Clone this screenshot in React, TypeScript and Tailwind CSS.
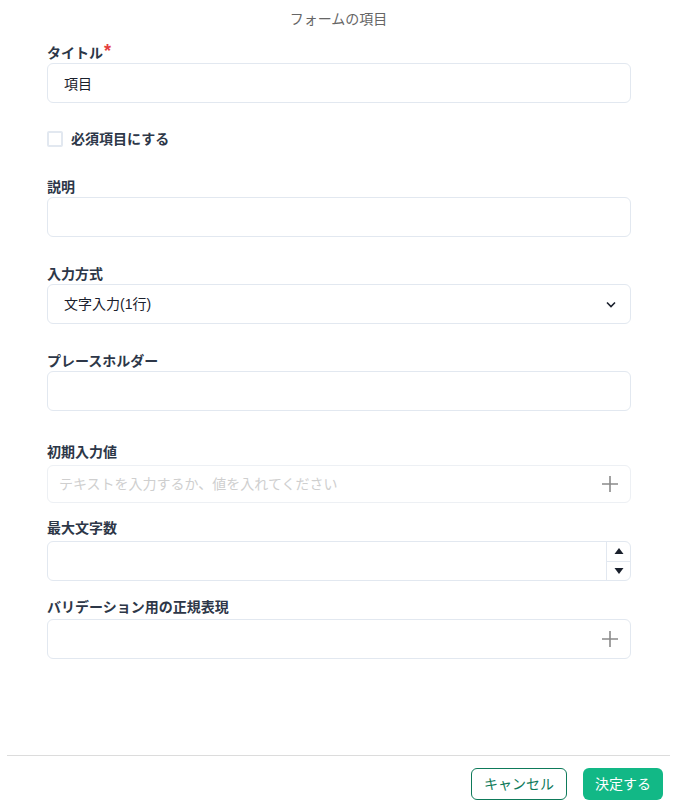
import React, { useState } from 'react'

const font = { fontFamily: '"Liberation Sans", "Noto Sans CJK JP", sans-serif' }

const Label = ({ text, required, className = '' }: { text: string; required?: boolean; className?: string }) => (
    <div className={`h-5 leading-5 text-[14px] font-bold text-[#2d3748] flex items-start ${className}`}>
        <span>{text}</span>
        {required && <span className="text-[#e53e3e] text-[18px] leading-[16px] ml-[1px] font-bold">*</span>}
    </div>
)

const Plus = () => (
    <svg width="18" height="18" viewBox="0 0 18 18" className="text-[#8a8a8a]">
        <path d="M9 1v16M1 9h16" stroke="currentColor" strokeWidth="1.6" fill="none" />
    </svg>
)

export default function App() {
    const [title, setTitle] = useState('項目')
    const [required, setRequired] = useState(false)

    return (
        <div style={font} className="w-full h-[808px] bg-white flex flex-col">
            <div className="h-[38px] flex items-center justify-center text-[14px] text-[#666]">フォームの項目</div>

            <div className="pl-[47px] pr-[46px] flex flex-col">
                <Label text="タイトル" required className="mt-[5px]" />
                <input
                    value={title}
                    onChange={(e) => setTitle(e.target.value)}
                    className="h-10 w-full border border-[#e2e8f0] rounded-md px-4 text-[14px] text-[#1a202c] outline-none"
                />

                <label className="mt-[28px] flex items-center gap-[8px] h-4 cursor-pointer">
                    <span
                        onClick={() => setRequired(!required)}
                        className={`w-4 h-4 rounded-[2px] border-2 ${required ? 'bg-[#12b886] border-[#12b886]' : 'border-[#e2e8f0]'}`}
                    />
                    <span className="text-[14px] font-bold text-[#2d3748]">必須項目にする</span>
                </label>

                <Label text="説明" className="mt-[30px]" />
                <input className="h-10 w-full border border-[#e2e8f0] rounded-md px-4 text-[14px] outline-none" />

                <Label text="入力方式" className="mt-[27px]" />
                <div className="h-10 w-full border border-[#e2e8f0] rounded-md pl-4 pr-[13px] flex items-center justify-between text-[14px] text-[#1a202c]">
                    <span>文字入力(1行)</span>
                    <svg width="12" height="12" viewBox="0 0 12 12">
                        <path d="M2 4.5L6 8.5l4-4" stroke="#1a202c" strokeWidth="1.6" fill="none" />
                    </svg>
                </div>

                <Label text="プレースホルダー" className="mt-[27px]" />
                <input className="h-10 w-full border border-[#e2e8f0] rounded-md px-4 text-[14px] outline-none" />

                <Label text="初期入力値" className="mt-[31px] mb-[3px]" />
                <div className="h-[38px] w-full border border-[#edf0f4] rounded-md pl-[11px] pr-[11px] flex items-center justify-between">
                    <span className="text-[14px] text-[#cfcfcf]">テキストを入力するか、値を入れてください</span>
                    <Plus />
                </div>

                <Label text="最大文字数" className="mt-[15px] mb-[3px]" />
                <div className="h-10 w-full border border-[#e2e8f0] rounded-md flex overflow-hidden">
                    <input type="text" className="flex-1 px-4 text-[14px] outline-none" />
                    <div className="w-6 border-l border-[#e2e8f0] flex flex-col">
                        <div className="flex-1 flex items-center justify-center border-b border-[#e2e8f0]">
                            <svg width="10" height="8" viewBox="0 0 10 8"><path d="M5 1L9.5 7H0.5Z" fill="#1a202c" /></svg>
                        </div>
                        <div className="flex-1 flex items-center justify-center">
                            <svg width="10" height="8" viewBox="0 0 10 8"><path d="M0.5 1H9.5L5 7Z" fill="#1a202c" /></svg>
                        </div>
                    </div>
                </div>

                <Label text="バリデーション用の正規表現" className="mt-[16px] mb-[2px]" />
                <div className="h-10 w-full border border-[#e2e8f0] rounded-md pl-4 pr-[11px] flex items-center justify-end">
                    <Plus />
                </div>
            </div>

            <div className="flex-1" />

            <div className="mx-[7px] border-t border-[#dcdcdc]" />
            <div className="flex justify-end gap-4 pt-3 pb-2 pr-[14px]">
                <button className="w-24 h-8 rounded-md border border-[#0e7a5a] text-[#0e7a5a] text-[14px] bg-white">キャンセル</button>
                <button className="w-20 h-8 rounded-md bg-[#12b886] text-white text-[14px]">決定する</button>
            </div>
        </div>
    )
}
